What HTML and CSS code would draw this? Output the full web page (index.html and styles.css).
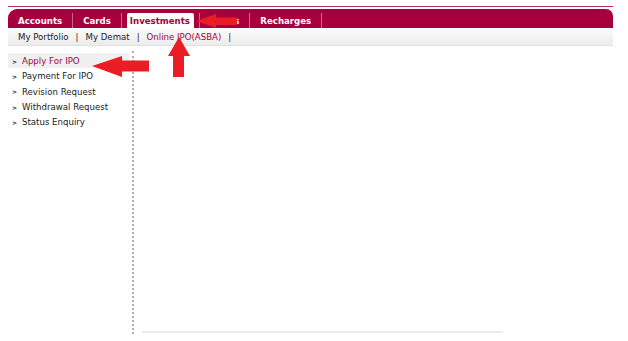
FILE: index.html
```html
<!DOCTYPE html>
<html>
<head>
<meta charset="utf-8">
<link rel="stylesheet" href="styles.css">
</head>
<body>
<div class="page">
  <div class="topline"></div>
  <div class="tabbar">
    <span class="tab">Accounts</span>
    <span class="tab">Cards</span>
    <span class="tab active">Investments</span>
    <span class="tab">Loans</span>
    <span class="tab">Recharges</span>
  </div>
  <div class="subbar">
    <span class="sub">My Portfolio</span><span class="pipe">|</span>
    <span class="sub">My Demat</span><span class="pipe">|</span>
    <span class="sub current">Online IPO(ASBA)</span><span class="pipe">|</span>
  </div>
  <div class="main">
    <ul class="menu">
      <li class="item selected"><span class="bullet">&gt;</span>Apply For IPO</li>
      <li class="item"><span class="bullet">&gt;</span>Payment For IPO</li>
      <li class="item"><span class="bullet">&gt;</span>Revision Request</li>
      <li class="item"><span class="bullet">&gt;</span>Withdrawal Request</li>
      <li class="item"><span class="bullet">&gt;</span>Status Enquiry</li>
    </ul>
    <div class="divider"></div>
    <div class="content">
      <div class="bottomline"></div>
    </div>
  </div>
  <svg class="arrows" width="628" height="341" viewBox="0 0 628 341">
    <polygon fill="#ec1c24" points="196,21 216,14 216,17.5 237,17.5 237,25 216,25 216,28"/>
    <polygon fill="#ec1c24" points="179,37 190,56 184,56 184,77 173,77 173,56 168,56"/>
    <polygon fill="#ec1c24" points="92,66 122,56 122,60.5 149,60.5 149,71.5 122,71.5 122,77"/>
  </svg>
</div>
</body>
</html>
```

FILE: styles.css
```css
html, body {
  margin: 0;
  padding: 0;
  background: #ffffff;
}
.page {
  position: relative;
  width: 628px;
  height: 341px;
  overflow: hidden;
  font-family: "DejaVu Sans", Verdana, sans-serif;
}
.topline {
  margin: 6px 0 0 8px;
  width: 605px;
  height: 1px;
  background: #b5305f;
}
.tabbar {
  margin: 2px 0 0 8px;
  width: 605px;
  height: 19px;
  box-sizing: border-box;
  background: #a8003c;
  border-radius: 9px 7px 0 0;
  display: flex;
  align-items: flex-end;
  padding-left: 5px;
}
.tab {
  color: #ffffff;
  font-weight: bold;
  font-size: 8.6px;
  height: 15px;
  border-right: 1px solid #c9668a;
  display: flex;
  align-items: center;
  padding: 1px 10px 0 5px;
  box-sizing: border-box;
}
.tab + .tab {
  padding-left: 10px;
}
.tab.active {
  background: #ffffff;
  color: #a8003c;
  border-radius: 2px 2px 0 0;
  border-right: none;
  padding: 1px 4px 0 3px;
  margin: 0 5px 0 5px;
}
.tab.active + .tab {
  padding-left: 11px;
  border-left: 1px solid #c9668a;
}
.subbar {
  margin-left: 8px;
  width: 605px;
  height: 18px;
  box-sizing: border-box;
  background: linear-gradient(#fbfbfb, #ececec);
  border-bottom: 1px solid #e2e2e2;
  display: flex;
  align-items: center;
  padding: 1px 0 0 10px;
  font-size: 8.6px;
  color: #222222;
}
.sub.current {
  color: #a8003c;
}
.pipe {
  padding: 0 7px;
  color: #222;
}
.main {
  display: flex;
  margin-left: 8px;
  margin-top: 5px;
}
.menu {
  list-style: none;
  margin: 0;
  padding: 2px 0 0 0;
  width: 121px;
}
.item {
  height: 15.3px;
  font-size: 8.6px;
  color: #222222;
  padding: 1px 0 0 4px;
  box-sizing: border-box;
  display: flex;
  align-items: center;
}
.item.selected {
  background: #f0f0f0;
  color: #a8003c;
}
.bullet {
  font-size: 6px;
  font-weight: bold;
  color: #333;
  width: 10px;
}
.divider {
  margin-left: 3px;
  width: 0;
  height: 283px;
  border-left: 2px dotted #b0b0b0;
}
.content {
  flex: 1;
  display: flex;
  align-items: flex-end;
  height: 283px;
}
.bottomline {
  margin-left: 8px;
  margin-bottom: 1px;
  width: 361px;
  height: 2px;
  background: #ececec;
}
.arrows {
  position: absolute;
  left: 0;
  top: 0;
}
```
